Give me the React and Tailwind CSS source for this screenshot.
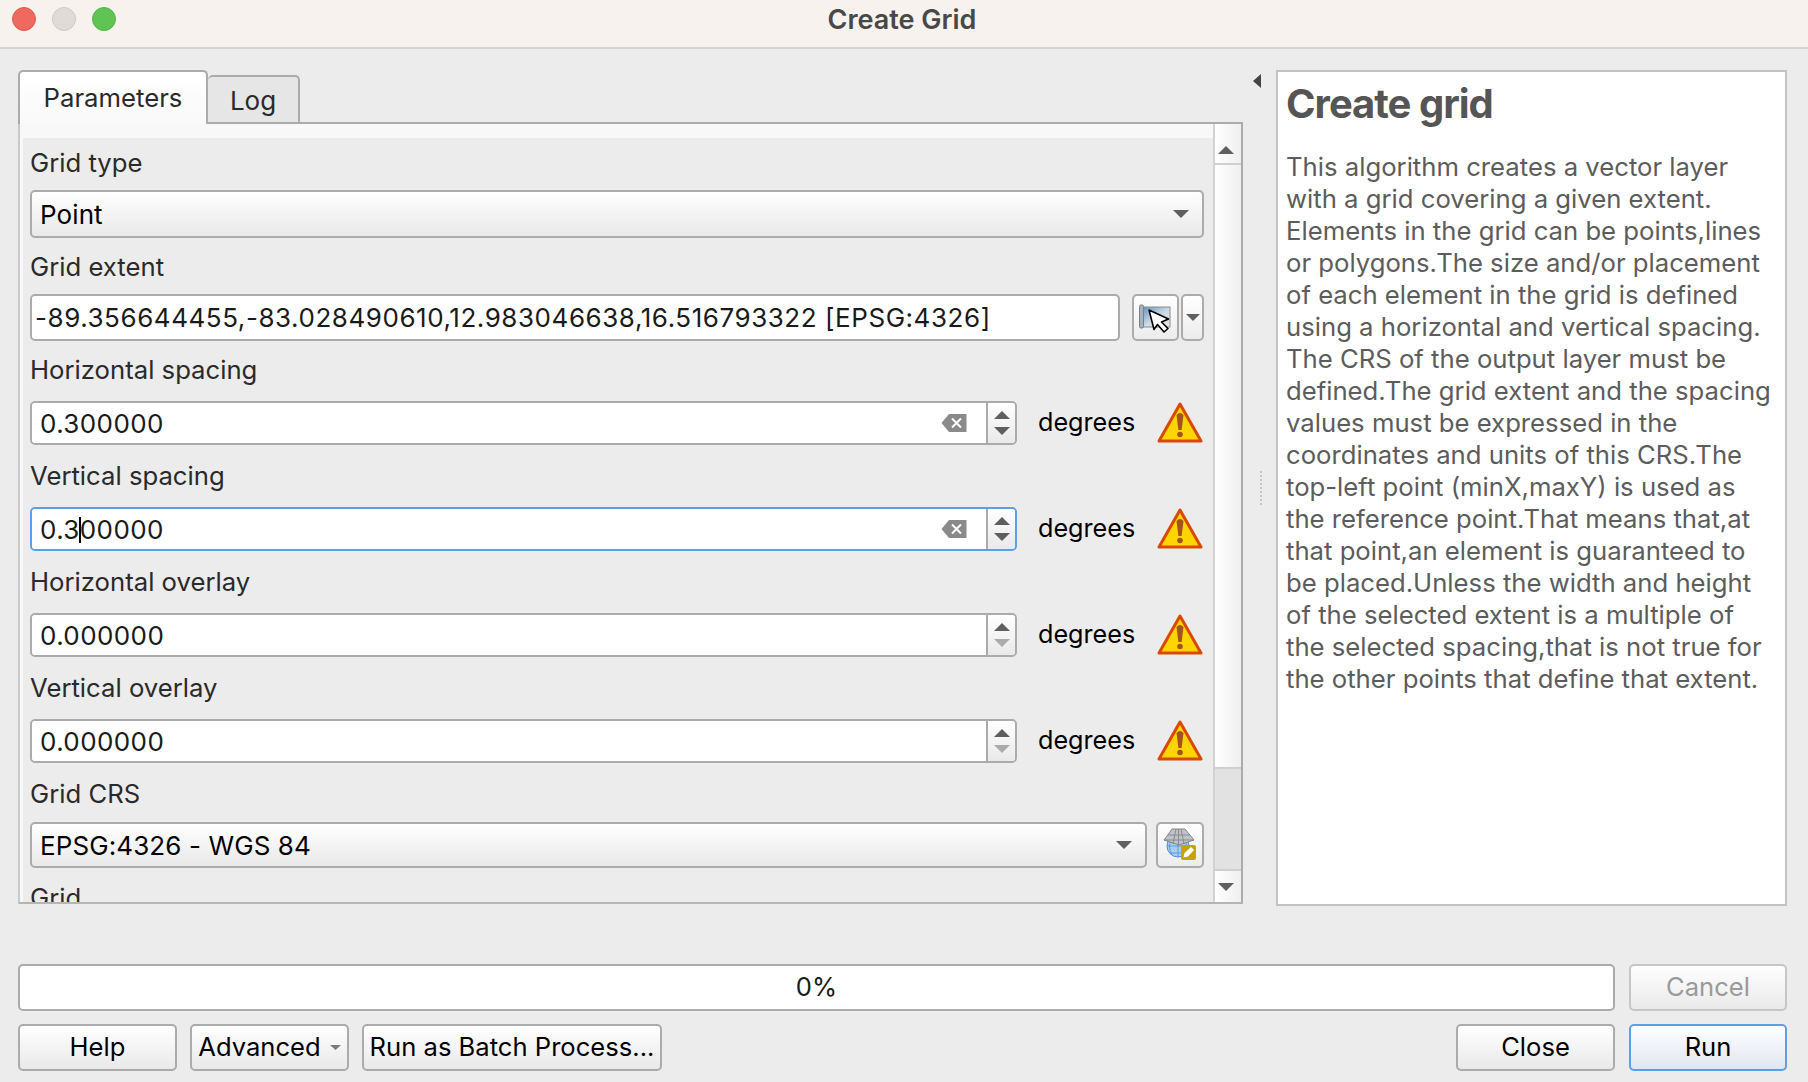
import React from 'react';

const ff = { fontFamily: 'Inter, "Noto Sans", sans-serif' };

function Warning() {
  return (
    <svg width="46" height="44" viewBox="0 0 46 44" className="-ml-px shrink-0">
      <path d="M23 3 L44 40 L2 40 Z" fill="#ffd500" stroke="#d94a00" strokeWidth="3" strokeLinejoin="round" />
      <path d="M19.5 14 Q23 10 26.5 14 L24.6 29 L21.4 29 Z" fill="#a4531c" />
      <circle cx="23" cy="33.5" r="2.8" fill="#a4531c" />
    </svg>
  );
}

function ClearIcon() {
  return (
    <svg width="26" height="20" viewBox="0 0 26 20">
      <path d="M0.5 10 L8 1 H25.5 V19 H8 Z" fill="#8a8a8a" />
      <path d="M11 5.5 L20 14.5 M20 5.5 L11 14.5" stroke="#fff" strokeWidth="2" />
    </svg>
  );
}

function Arrow({ dir = 'down', color = '#5f5f5f', w = 16, h = 8 }) {
  const d = dir === 'down' ? `M0 0 H${w} L${w / 2} ${h} Z` : `M0 ${h} H${w} L${w / 2} 0 Z`;
  return (
    <svg width={w} height={h} viewBox={`0 0 ${w} ${h}`} className="shrink-0">
      <path d={d} fill={color} />
    </svg>
  );
}

function MapCursor() {
  return (
    <svg width="34" height="30" viewBox="0 0 34 30">
      <defs>
        <linearGradient id="mapfill" x1="0" y1="0" x2="1" y2="1">
          <stop offset="0" stopColor="#5f8fbd" />
          <stop offset="0.55" stopColor="#cfdce6" />
          <stop offset="1" stopColor="#e3e3e3" />
        </linearGradient>
      </defs>
      <rect x="2" y="4" width="29" height="20" fill="url(#mapfill)" stroke="#8b8b8b" />
      <rect x="0.5" y="2" width="4" height="23" rx="1.5" fill="#a9b2ba" stroke="#77808a" />
      <path d="M10 7 L15 26.5 L18.5 21.5 L25 29 L29 25.5 L22.5 19 L29.5 16 Z" fill="#fff" stroke="#000" strokeWidth="1.6" strokeLinejoin="round" />
    </svg>
  );
}

function GlobeEdit() {
  return (
    <svg width="34" height="34" viewBox="0 0 34 34">
      <circle cx="15" cy="18" r="11" fill="#a8cdf0" stroke="#4f8fd0" />
      <path d="M4 18 H26 M15 7 V29 M7 25 H23 M9 9 Q4 18 9 27 M21 9 Q26 18 21 27" fill="none" stroke="#4f8fd0" strokeWidth="0.8" />
      <path d="M9 1 H22 L31 12 L16 17 L1 12 Z" fill="#bfc2c6" stroke="#85888c" />
      <path d="M1 12 H31 M5 7 H27 M13 1 L10 16 M18 1 L21 16 M15.5 1 V17" fill="none" stroke="#7c7f83" strokeWidth="0.8" />
      <rect x="18" y="17" width="15" height="15" rx="2" fill="#c9a20a" />
      <path d="M20.5 29.5 L21.5 25 L28 19 L31 22 L25 28.5 Z" fill="#fff" />
    </svg>
  );
}

function Label({ children, className = '' }) {
  return <div className={`h-[28px] shrink-0 text-[25.7px] leading-[28px] text-[#2a2a2a] ${className}`}>{children}</div>;
}

function Combo({ value, className = '' }) {
  return (
    <div className={`flex shrink-0 items-center justify-between rounded-[5px] border-2 border-[#ababab] bg-gradient-to-b from-white to-[#e9e9e9] pl-[8px] pr-[13px] text-[26px] tracking-[0.1px] text-black ${className}`}>
      <span>{value}</span>
      <Arrow />
    </div>
  );
}

function Spin({ children, clear, focused, lowerDim, className = '' }) {
  return (
    <div className={`flex shrink-0 items-center ${className}`}>
      <div
        className={`flex h-full w-[987px] items-stretch overflow-hidden rounded-[5px] border-2 ${
          focused ? 'border-[#5b9fe6]' : 'border-[#ababab]'
        }`}
      >
        <div className="flex flex-1 items-center justify-between bg-white pl-[8px] pr-[19px] text-[26px] tracking-[0.4px] text-[#1a1a1a]">
          <span>{children}</span>
          {clear && <ClearIcon />}
        </div>
        <div className="flex w-[29px] flex-col items-center justify-center gap-[8px] border-l-2 border-[#ababab] bg-gradient-to-b from-white to-[#e9e9e9]">
          <Arrow dir="up" />
          <Arrow color={lowerDim ? '#ababab' : '#5f5f5f'} />
        </div>
      </div>
      <span className="ml-[21px] w-[120px] text-[25.2px] text-black">degrees</span>
      <Warning />
    </div>
  );
}

function Button({ children, kind, className = '' }) {
  const tone =
    kind === 'disabled'
      ? 'border-[#c6c6c6] from-white to-[#e9e9e9] text-[#9a9a9a]'
      : kind === 'default'
        ? 'border-[#5b9fe6] from-white to-[#e1e6ef] text-black'
        : 'border-[#ababab] from-white to-[#e9e9e9] text-black';
  return (
    <div className={`flex h-[47px] items-center justify-center rounded-[5px] border-2 bg-gradient-to-b text-[25.6px] ${tone} ${className}`}>
      {children}
    </div>
  );
}

const help = [
  'This algorithm creates a vector layer',
  'with a grid covering a given extent.',
  'Elements in the grid can be points,lines',
  'or polygons.The size and/or placement',
  'of each element in the grid is defined',
  'using a horizontal and vertical spacing.',
  'The CRS of the output layer must be',
  'defined.The grid extent and the spacing',
  'values must be expressed in the',
  'coordinates and units of this CRS.The',
  'top-left point (minX,maxY) is used as',
  'the reference point.That means that,at',
  'that point,an element is guaranteed to',
  'be placed.Unless the width and height',
  'of the selected extent is a multiple of',
  'the selected spacing,that is not true for',
  'the other points that define that extent.',
];

export default function App() {
  return (
    <div className="flex h-[1082px] w-[1808px] flex-col overflow-hidden bg-[#ececec]" style={ff}>
      {/* title bar */}
      <div className="relative flex h-[49px] shrink-0 items-center border-b-2 border-[#d4d2cf] bg-[#f7f2ee] pb-[9px]">
        <div className="flex items-center gap-[16px] pl-[12px]">
          <div className="h-[24px] w-[24px] rounded-full border border-[#dd5a50] bg-[#f0695f]" />
          <div className="h-[24px] w-[24px] rounded-full border border-[#cfcac6] bg-[#dfdbd7]" />
          <div className="h-[24px] w-[24px] rounded-full border border-[#52b548] bg-[#5fc454]" />
        </div>
        <div className="absolute inset-x-0 top-0 flex h-[40px] items-center justify-center pr-[4px] text-[27px] font-semibold text-[#484848]">
          Create Grid
        </div>
      </div>

      {/* main area */}
      <div className="flex h-[859px] shrink-0 pl-[18px] pt-[21px]">
        <div className="flex w-[1225px] flex-col">
          <div className="flex h-[52px] items-end">
            <div className="z-10 -mb-[2px] flex h-[54px] w-[190px] items-center justify-center rounded-t-[5px] border-2 border-b-0 border-[#ababab] bg-gradient-to-b from-white to-[#f9f9f9] text-[25.7px] text-[#2a2a2a]">
              Parameters
            </div>
            <div className="flex h-[47px] w-[92px] items-center justify-center rounded-t-[5px] border-2 border-b-0 border-l-0 border-[#ababab] bg-[#e6e6e6] pt-[2px] text-[26px] text-[#2a2a2a]">
              Log
            </div>
          </div>
          <div className="flex h-[782px] border-2 border-[#ababab] border-b-[#b5b5b5] border-l-[#c9c9c9] bg-[#ececec]">
            <div className="flex h-full w-[1193px] flex-col overflow-hidden border-l-[3px] border-t-[14px] border-[#f8f8f8] pl-[7px] pr-[6px] pt-[11px]">
              <Label>Grid type</Label>
              <Combo value="Point" className="mt-[13px] h-[48px] w-[1174px]" />
              <Label className="mt-[15px]">Grid extent</Label>
              <div className="mt-[13px] flex h-[47px] w-[1174px] shrink-0">
                <div className="flex w-[1090px] items-center rounded-[5px] border-2 border-[#ababab] bg-white pl-[3px] text-[26px] tracking-[0.55px] text-[#1a1a1a]">
                  -89.356644455,-83.028490610,12.983046638,16.516793322 [EPSG:4326]
                </div>
                <div className="ml-[12px] flex w-[47px] items-center justify-center rounded-[5px] border-2 border-[#ababab] bg-gradient-to-b from-white to-[#ececec]">
                  <MapCursor />
                </div>
                <div className="ml-[2px] flex w-[23px] items-center justify-center rounded-[5px] border-2 border-[#ababab] bg-gradient-to-b from-white to-[#ececec]">
                  <Arrow w={14} h={7} />
                </div>
              </div>
              <Label className="mt-[15px]">Horizontal spacing</Label>
              <Spin clear className="mt-[17px] h-[44px]">0.300000</Spin>
              <Label className="mt-[17px]">Vertical spacing</Label>
              <Spin clear focused className="mt-[17px] h-[44px]">
                0.3<span className="-mx-px inline-block h-[26px] w-[2px] bg-black align-[-4px]" />00000
              </Spin>
              <Label className="mt-[17px]">Horizontal overlay</Label>
              <Spin lowerDim className="mt-[17px] h-[44px]">0.000000</Spin>
              <Label className="mt-[17px]">Vertical overlay</Label>
              <Spin lowerDim className="mt-[17px] h-[44px]">0.000000</Spin>
              <Label className="mt-[17px]">Grid CRS</Label>
              <div className="mt-[14px] flex h-[46px] w-[1174px] shrink-0">
                <Combo value="EPSG:4326 - WGS 84" className="w-[1117px]" />
                <div className="ml-[9px] flex w-[48px] items-center justify-center rounded-[5px] border-2 border-[#ababab] bg-gradient-to-b from-white to-[#ececec]">
                  <GlobeEdit />
                </div>
              </div>
              <Label className="mt-[16px]">Grid</Label>
            </div>
            {/* scrollbar */}
            <div className="flex w-[28px] flex-col items-stretch border-l-2 border-[#d2d2d2] bg-gradient-to-r from-white to-[#efefef]">
              <div className="flex h-[41px] items-end justify-center border-b-2 border-[#d0d0d0] pb-[9px] pr-[4px]">
                <Arrow dir="up" w={16} h={8} />
              </div>
              <div className="flex-1" />
              <div className="h-[104px] border-y-2 border-[#cfcfcf] bg-[#e2e2e2]" />
              <div className="flex h-[31px] items-center justify-center pr-[4px]">
                <Arrow w={16} h={8} />
              </div>
            </div>
          </div>
        </div>

        {/* collapse arrow */}
        <div className="flex w-[33px] flex-col items-center pr-[6px] pt-[4px]">
          <svg width="8" height="14" viewBox="0 0 8 14">
            <path d="M8 0 V14 L0 7 Z" fill="#444" />
          </svg>
          <div className="ml-[8px] mt-[383px] h-[34px] border-l-2 border-dotted border-[#c4c4c4]" />
        </div>

        {/* help panel */}
        <div className="h-[836px] w-[511px] border-2 border-[#c2c2c2] bg-white pl-[8px] pt-[7px] text-[#5c5c5c]">
          <div className="h-[50px] text-[40px] font-bold leading-[50px] tracking-[-1px] text-[#555]">Create grid</div>
          <div className="mt-[22px] text-[25.7px] leading-[32px]">
            {help.map((line) => (
              <div key={line} className="whitespace-nowrap">{line}</div>
            ))}
          </div>
        </div>
      </div>

      {/* progress */}
      <div className="mt-[56px] flex h-[47px] shrink-0 pl-[18px]">
        <div className="flex w-[1597px] items-center justify-center rounded-[5px] border-2 border-[#ababab] bg-white text-[25.6px] text-[#1a1a1a]">
          0%
        </div>
        <Button kind="disabled" className="ml-[14px] w-[158px]">Cancel</Button>
      </div>

      {/* buttons */}
      <div className="mt-[13px] flex shrink-0 pl-[18px]">
        <Button className="w-[159px]">Help</Button>
        <Button className="ml-[13px] w-[159px] gap-[9px]">
          Advanced
          <Arrow w={11} h={5} color="#7a7a7a" />
        </Button>
        <Button className="ml-[13px] w-[300px]">Run as Batch Process...</Button>
        <Button className="ml-[794px] w-[159px]">Close</Button>
        <Button kind="default" className="ml-[14px] w-[158px]">Run</Button>
      </div>
    </div>
  );
}
